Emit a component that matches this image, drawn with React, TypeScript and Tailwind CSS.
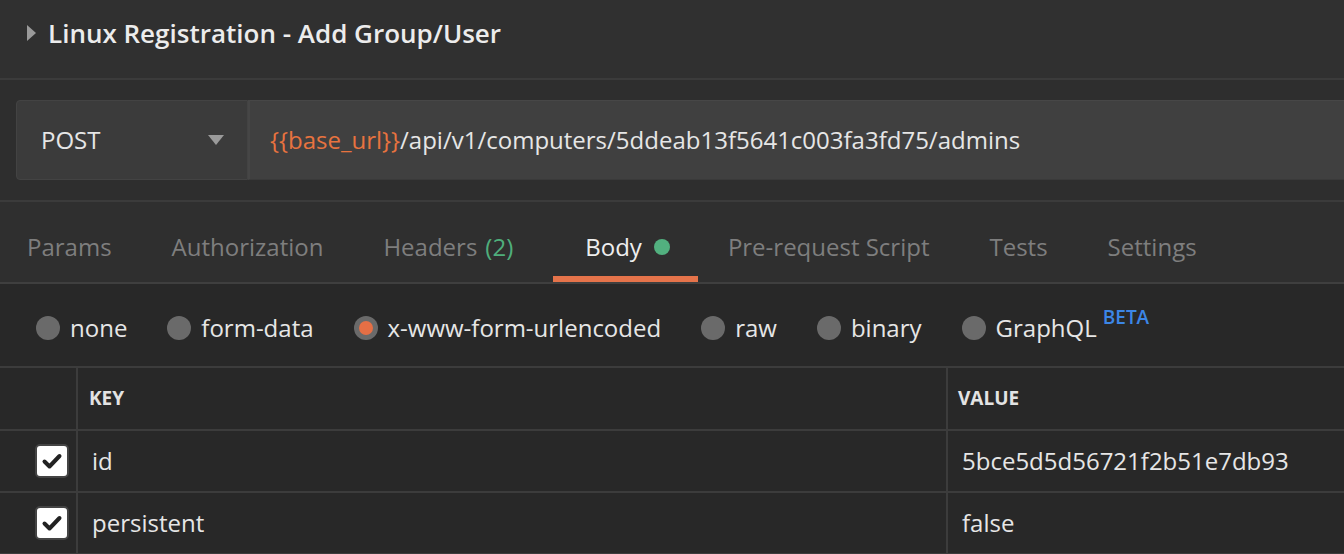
import React from "react";

const tabs = [
  { label: "Params", cls: "pl-[27px] pr-[30px]" },
  { label: "Authorization", cls: "px-[30px]" },
  { label: "Headers", count: "(2)", cls: "px-[30px]" },
  { label: "Body", active: true, cls: "ml-[10px] pl-[32px] pr-[28px]" },
  { label: "Pre-request Script", cls: "px-[30px]" },
  { label: "Tests", cls: "px-[30px]" },
  { label: "Settings", cls: "px-[30px]" },
];

const radios = [
  { label: "none" },
  { label: "form-data" },
  { label: "x-www-form-urlencoded", selected: true },
  { label: "raw" },
  { label: "binary" },
  { label: "GraphQL", beta: true },
];

const rows = [
  { key: "id", value: "5bce5d5d56721f2b51e7db93" },
  { key: "persistent", value: "false" },
];

function Check() {
  return (
    <div className="w-[34px] h-[34px] rounded-[5px] bg-white border-2 border-[#444] flex items-center justify-center">
      <svg width="22" height="18" viewBox="0 0 22 18">
        <path d="M3.5 9.5 L8.5 14.5 L18.5 4" fill="none" stroke="#222" strokeWidth="4" strokeLinecap="round" strokeLinejoin="round" />
      </svg>
    </div>
  );
}

export default function App() {
  return (
    <div className="w-[1344px] h-[554px] overflow-hidden bg-[#282828] font-['Open_Sans',sans-serif] text-[#e6e6e6]">
      {/* title */}
      <div className="h-[80px] bg-[#303030] flex items-center pl-[27px] pb-[12px] border-b-2 border-[#3b3b3b]">
        <svg width="9" height="16" viewBox="0 0 9 16" className="mr-[12px]">
          <path d="M0 0 L9 8 L0 16 Z" fill="#9a9a9a" />
        </svg>
        <span className="text-[26px] font-semibold text-[#ececec]">Linux Registration - Add Group/User</span>
      </div>

      {/* url bar */}
      <div className="h-[122px] bg-[#2e2e2e] pt-[20px] pl-[16px] border-b-2 border-[#3b3b3b]">
        <div className="flex h-[80px]">
          <div className="w-[232px] h-full bg-[#3b3b3b] rounded-l-[4px] border border-[#434343] flex items-center pl-[24px] pr-[23px] justify-between">
            <span className="text-[24px] text-[#e6e6e6]">POST</span>
            <svg width="16" height="10" viewBox="0 0 16 10">
              <path d="M0 0 L16 0 L8 10 Z" fill="#9a9a9a" />
            </svg>
          </div>
          <div className="flex-1 h-full bg-[#404040] border-l-2 border-[#464646] border-t border-b border-t-[#474747] border-b-[#3a3a3a] flex items-center pl-[20px]">
            <span className="text-[24px] text-[#e6e6e6] whitespace-nowrap">
              <span className="text-[#e8733f]">{"{{base_url}}"}</span>/api/v1/computers/5ddeab13f5641c003fa3fd75/admins
            </span>
          </div>
        </div>
      </div>

      {/* tabs */}
      <div className="h-[82px] bg-[#2f2f2f] border-b-2 border-[#3f3f3f] flex items-stretch">
        {tabs.map((t) => (
          <div
            key={t.label}
            className={
              "flex items-center text-[24px] pt-[16px] border-b-[6px] " +
              t.cls +
              " " +
              (t.active ? "border-[#e5734a] text-[#eeeeee]" : "border-transparent text-[#7e7e7e]")
            }
          >
            <span>{t.label}</span>
            {t.count && <span className="ml-[8px] text-[#4fae7c]">{t.count}</span>}
            {t.active && <span className="ml-[12px] w-[16px] h-[16px] rounded-full bg-[#52b07f] inline-block" />}
          </div>
        ))}
      </div>

      {/* radios */}
      <div className="h-[84px] bg-[#282828] border-b-2 border-[#3c3c3c] flex items-center pl-[36px] pt-[6px] gap-[40px]">
        {radios.map((r) => (
          <div key={r.label} className="flex items-center">
            <div className="w-[24px] h-[24px] rounded-full bg-[#6a6a6a] flex items-center justify-center">
              {r.selected && <div className="w-[14px] h-[14px] rounded-full bg-[#e56f45]" />}
            </div>
            <span className="ml-[10px] text-[24px] text-[#e6e6e6]">{r.label}</span>
            {r.beta && <span className="ml-[6px] self-start mt-[-7px] text-[19px] font-semibold text-[#3c86e6]">BETA</span>}
          </div>
        ))}
      </div>

      {/* table */}
      <div className="bg-[#282828]">
        <div className="flex h-[63px] border-b-2 border-[#3c3c3c]">
          <div className="w-[78px] border-r-2 border-[#3c3c3c]" />
          <div className="w-[870px] border-r-2 border-[#3c3c3c] flex items-center pl-[11px] text-[19px] font-bold text-[#e3e3e3]">KEY</div>
          <div className="flex-1 flex items-center pl-[10px] text-[19px] font-bold text-[#e3e3e3]">VALUE</div>
        </div>
        {rows.map((r) => (
          <div key={r.key} className="flex h-[62px] border-b-2 border-[#3c3c3c]">
            <div className="w-[78px] border-r-2 border-[#3c3c3c] flex items-center justify-end pr-[7px]">
              <Check />
            </div>
            <div className="w-[870px] border-r-2 border-[#3c3c3c] flex items-center pl-[14px] text-[24px] text-[#e6e6e6]">{r.key}</div>
            <div className="flex-1 flex items-center pl-[14px] text-[24px] text-[#e6e6e6]">{r.value}</div>
          </div>
        ))}
      </div>
    </div>
  );
}
